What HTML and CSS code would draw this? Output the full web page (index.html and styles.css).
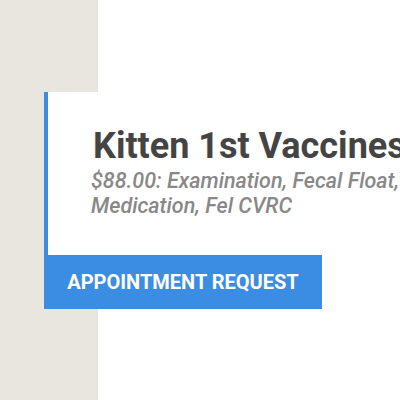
FILE: index.html
```html
<!DOCTYPE html>
<html lang="en">
<head>
  <meta charset="UTF-8">
  <meta name="viewport" content="width=device-width, initial-scale=1.0">
  <title>Kitten 1st Vaccines</title>
  <link rel="stylesheet" href="styles.css">
</head>
<body>
  <div class="page">
    <aside class="sidebar"></aside>

    <main class="content">
      <!-- package card -->
      <div class="package">
        <h2 class="package-title">Kitten 1st Vaccines</h2>
        <p class="package-desc">$88.00: Examination, Fecal Float, Deworming,<br>Medication, Fel CVRC</p>
      </div>
      <button class="request-btn">Appointment Request</button>
    </main>
  </div>
</body>
</html>
```

FILE: styles.css
```css
body {
  margin: 0;
  padding: 0;
  font-family: Roboto, "Liberation Sans", sans-serif;
  background-color: white;
  overflow: hidden;
}

.page {
  display: flex;
  height: 400px;
}

.sidebar {
  width: 98px;
  flex-shrink: 0;
  background-color: #e9e6df;
}

.content {
  margin-left: -54px;
  padding-top: 92px;
  flex: 1;
  min-width: 0;
}

.package {
  background: white;
  border-left: 4px solid #3b8ce3;
  padding: 34px 0 37px 45px;
  width: 560px;
}

.package-title {
  margin: 0;
  font-size: 36px;
  font-weight: 700;
  color: #444444;
  line-height: 40px;
  white-space: nowrap;
}

.package-desc {
  margin: 2px 0 0 -2px;
  font-size: 21.5px;
  font-weight: 500;
  font-style: italic;
  color: #888888;
  line-height: 25px;
  white-space: nowrap;
}

.request-btn {
  display: block;
  width: 278px;
  height: 54px;
  padding: 0;
  background-color: #3b8ce3;
  color: white;
  border: none;
  font-family: Roboto, "Liberation Sans", sans-serif;
  font-size: 20px;
  font-weight: 700;
  text-transform: uppercase;
  cursor: pointer;
}
```
